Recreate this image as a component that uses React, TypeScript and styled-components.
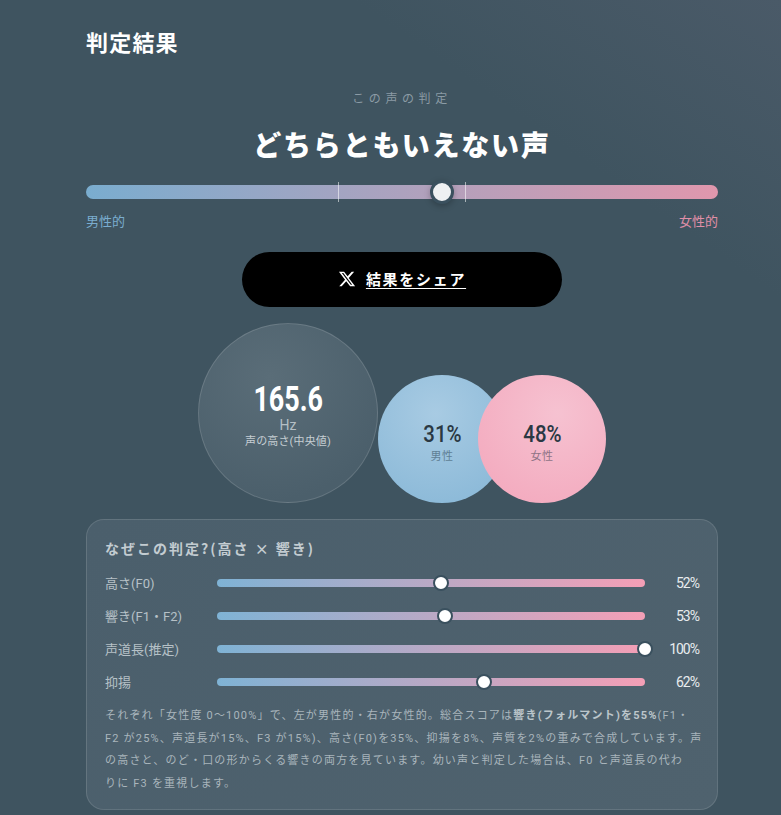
import React from "react";
import styled, { createGlobalStyle } from "styled-components";

const GlobalStyle = createGlobalStyle`
  html, body {
    margin: 0;
    padding: 0;
    height: 100%;
    overflow: hidden;
  }
  body {
    font-family: "Noto Sans CJK JP", "Noto Sans", sans-serif;
    background: #3f5461;
  }
`;

const Page = styled.div`
  width: 781px;
  height: 815px;
  box-sizing: border-box;
  padding: 0 63px 0 86px;
  overflow: hidden;
  background: linear-gradient(215deg, #4a5a68 0%, #3f5460 22%, #3f5460 100%);
  color: #fff;
`;

const Title = styled.h2`
  margin: 0;
  padding-top: 25px;
  height: 32px;
  line-height: 32px;
  font-size: 22px;
  font-weight: 700;
  letter-spacing: 1.2px;
  box-sizing: content-box;
`;

const Kicker = styled.div`
  margin-top: 32px;
  height: 18px;
  line-height: 18px;
  text-align: center;
  font-size: 12px;
  letter-spacing: 4.6px;
  color: #8b9ba5;
`;

const Verdict = styled.div`
  margin-top: 14px;
  height: 46px;
  line-height: 46px;
  text-align: center;
  font-size: 28px;
  font-weight: 900;
  letter-spacing: 1.8px;
`;

const Gauge = styled.div`
  position: relative;
  margin-top: 18px;
  height: 14px;
  border-radius: 7px;
  background: linear-gradient(90deg, #7aadcf, #e097ad);
`;

const GaugeTick = styled.span<{ $pos: number }>`
  position: absolute;
  top: -3px;
  left: ${(p) => p.$pos}%;
  width: 1px;
  height: 20px;
  background: rgba(255, 255, 255, 0.55);
`;

const GaugeThumb = styled.span<{ $pos: number }>`
  position: absolute;
  top: 50%;
  left: ${(p) => p.$pos}%;
  width: 18px;
  height: 18px;
  transform: translate(-50%, -50%);
  border: 3px solid #3a505e;
  border-radius: 50%;
  background: #eef0f2;
  box-shadow: 0 2px 6px rgba(0, 0, 0, 0.25);
`;

const GaugeLabels = styled.div`
  display: flex;
  justify-content: space-between;
  margin-top: 13px;
  height: 18px;
  line-height: 18px;
  font-size: 13px;
`;

const MaleLabel = styled.span`
  color: #7aadcf;
`;

const FemaleLabel = styled.span`
  color: #e08fa8;
`;

const ShareButton = styled.a`
  display: flex;
  align-items: center;
  justify-content: center;
  gap: 10px;
  width: 320px;
  height: 55px;
  margin: 22px auto 0;
  padding-bottom: 2px;
  box-sizing: border-box;
  border-radius: 28px;
  background: #000;
  color: #fff;
  font-size: 15px;
  font-weight: 700;
  letter-spacing: 1.7px;
  text-decoration: underline;
  text-underline-offset: 3px;
`;

const Bubbles = styled.div`
  display: flex;
  align-items: flex-end;
  justify-content: center;
  margin: 16px 0 0;
  height: 180px;
`;

const Bubble = styled.div`
  display: flex;
  flex-direction: column;
  align-items: center;
  justify-content: center;
  box-sizing: border-box;
  border-radius: 50%;
`;

const HzBubble = styled(Bubble)`
  width: 180px;
  height: 180px;
  border: 1px solid rgba(255, 255, 255, 0.14);
  background: radial-gradient(circle at 40% 30%, #5a6d78, #4b5f6b 75%);
`;

const MaleBubble = styled(Bubble)`
  width: 128px;
  height: 128px;
  background: radial-gradient(circle at 45% 30%, #a8cbe3, #86b6d6 100%);
`;

const FemaleBubble = styled(Bubble)`
  width: 128px;
  height: 128px;
  margin-left: -28px;
  background: radial-gradient(circle at 62% 30%, #f6c2d1, #f3a6bb 100%);
`;

const HzValue = styled.div`
  font-family: "Roboto", sans-serif;
  font-size: 35px;
  font-weight: 700;
  line-height: 36px;
  transform: scaleX(0.77);
  margin-top: 7px;
`;

const HzUnit = styled.div`
  font-family: "Roboto", sans-serif;
  font-size: 14px;
  line-height: 15px;
  color: #b4bfc5;
`;

const HzCaption = styled.div`
  font-family: "Roboto", "Noto Sans CJK JP", sans-serif;
  font-size: 11px;
  letter-spacing: 0.15px;
  line-height: 18px;
  color: #c5ced3;
`;

const PctValue = styled.div`
  font-family: "Roboto", sans-serif;
  font-size: 24px;
  font-weight: 500;
  line-height: 26px;
  color: #2a3843;
  transform: scaleX(0.85);
  margin-top: 6px;
`;

const PctCaption = styled.div<{ $tone: string }>`
  font-size: 11px;
  line-height: 16px;
  letter-spacing: 0.5px;
  color: ${(p) => p.$tone};
`;

const Card = styled.section`
  box-sizing: border-box;
  height: 291px;
  margin-top: 16px;
  padding: 16px 18px 0;
  border: 1px solid rgba(255, 255, 255, 0.12);
  border-radius: 18px;
  background: linear-gradient(135deg, #4b5f6c, #4f626e);
`;

const CardTitle = styled.h3`
  margin: 0 0 6px;
  height: 24px;
  line-height: 24px;
  font-size: 14px;
  font-weight: 700;
  letter-spacing: 2px;
  color: #c3ccd1;
`;

const Rows = styled.div`
  display: flex;
  flex-direction: column;
`;

const Row = styled.div`
  display: grid;
  grid-template-columns: 112px 428px 1fr;
  align-items: center;
  height: 33px;
`;

const RowLabel = styled.span`
  font-family: "Roboto", "Noto Sans CJK JP", sans-serif;
  font-size: 13px;
  color: #b6c1c7;
  white-space: nowrap;
`;

const Track = styled.div`
  position: relative;
  height: 8px;
  border-radius: 4px;
  background: linear-gradient(90deg, #7fb3d5, #f49fb6);
`;

const TrackThumb = styled.span<{ $pos: number }>`
  position: absolute;
  top: 50%;
  left: ${(p) => p.$pos}%;
  width: 12px;
  height: 12px;
  transform: translate(-50%, -50%);
  border: 2px solid #3a505e;
  border-radius: 50%;
  background: #fff;
`;

const RowPct = styled.span`
  font-family: "Roboto", sans-serif;
  font-size: 14px;
  letter-spacing: -1px;
  text-align: right;
  color: #e8ecee;
`;

const Note = styled.p`
  margin: 7px -7px 0 0;
  font-family: "Roboto", "Noto Sans CJK JP", sans-serif;
  font-size: 11px;
  line-height: 22.6px;
  letter-spacing: 1.2px;
  color: #a9b5bc;
  strong {
    font-weight: 700;
    color: #bcc6cb;
  }
`;

const factors = [
  { label: "高さ(F0)", pct: 52, pos: 52.4 },
  { label: "響き(F1・F2)", pct: 53, pos: 53.3 },
  { label: "声道長(推定)", pct: 100, pos: 100 },
  { label: "抑揚", pct: 62, pos: 62.4 },
];

const XIcon = () => (
  <svg width="18" height="18" viewBox="0 0 24 24" fill="currentColor">
    <path d="M18.244 2.25h3.308l-7.227 8.26 8.502 11.24H16.17l-5.214-6.817L4.99 21.75H1.68l7.73-8.835L1.254 2.25H8.08l4.713 6.231zm-1.161 17.52h1.833L7.084 4.126H5.117z" />
  </svg>
);

export default function App() {
  return (
    <Page>
      <GlobalStyle />
      <Title>判定結果</Title>
      <Kicker>この声の判定</Kicker>
      <Verdict>どちらともいえない声</Verdict>

      <Gauge>
        <GaugeTick $pos={39.9} />
        <GaugeTick $pos={60} />
        <GaugeThumb $pos={56.3} />
      </Gauge>
      <GaugeLabels>
        <MaleLabel>男性的</MaleLabel>
        <FemaleLabel>女性的</FemaleLabel>
      </GaugeLabels>

      <ShareButton href="#">
        <XIcon />
        結果をシェア
      </ShareButton>

      <Bubbles>
        <HzBubble>
          <HzValue>165.6</HzValue>
          <HzUnit>Hz</HzUnit>
          <HzCaption>声の高さ(中央値)</HzCaption>
        </HzBubble>
        <MaleBubble>
          <PctValue>31%</PctValue>
          <PctCaption $tone="#5f7f95">男性</PctCaption>
        </MaleBubble>
        <FemaleBubble>
          <PctValue>48%</PctValue>
          <PctCaption $tone="#8f7486">女性</PctCaption>
        </FemaleBubble>
      </Bubbles>

      <Card>
        <CardTitle>なぜこの判定?(高さ × 響き)</CardTitle>
        <Rows>
          {factors.map((f) => (
            <Row key={f.label}>
              <RowLabel>{f.label}</RowLabel>
              <Track>
                <TrackThumb $pos={f.pos} />
              </Track>
              <RowPct>{f.pct}%</RowPct>
            </Row>
          ))}
        </Rows>
        <Note>
          それぞれ「女性度 0〜100%」で、左が男性的・右が女性的。総合スコアは
          <strong>響き(フォルマント)を55%</strong>(F1・
          <br />
          F2 が25%、声道長が15%、F3 が15%)、高さ(F0)を35%、抑揚を8%、声質を2%の重みで合成しています。声の高さと、のど・口の形からくる響きの両方を見ています。幼い声と判定した場合は、F0 と声道長の代わ
          <br />
          りに F3 を重視します。
        </Note>
      </Card>
    </Page>
  );
}
